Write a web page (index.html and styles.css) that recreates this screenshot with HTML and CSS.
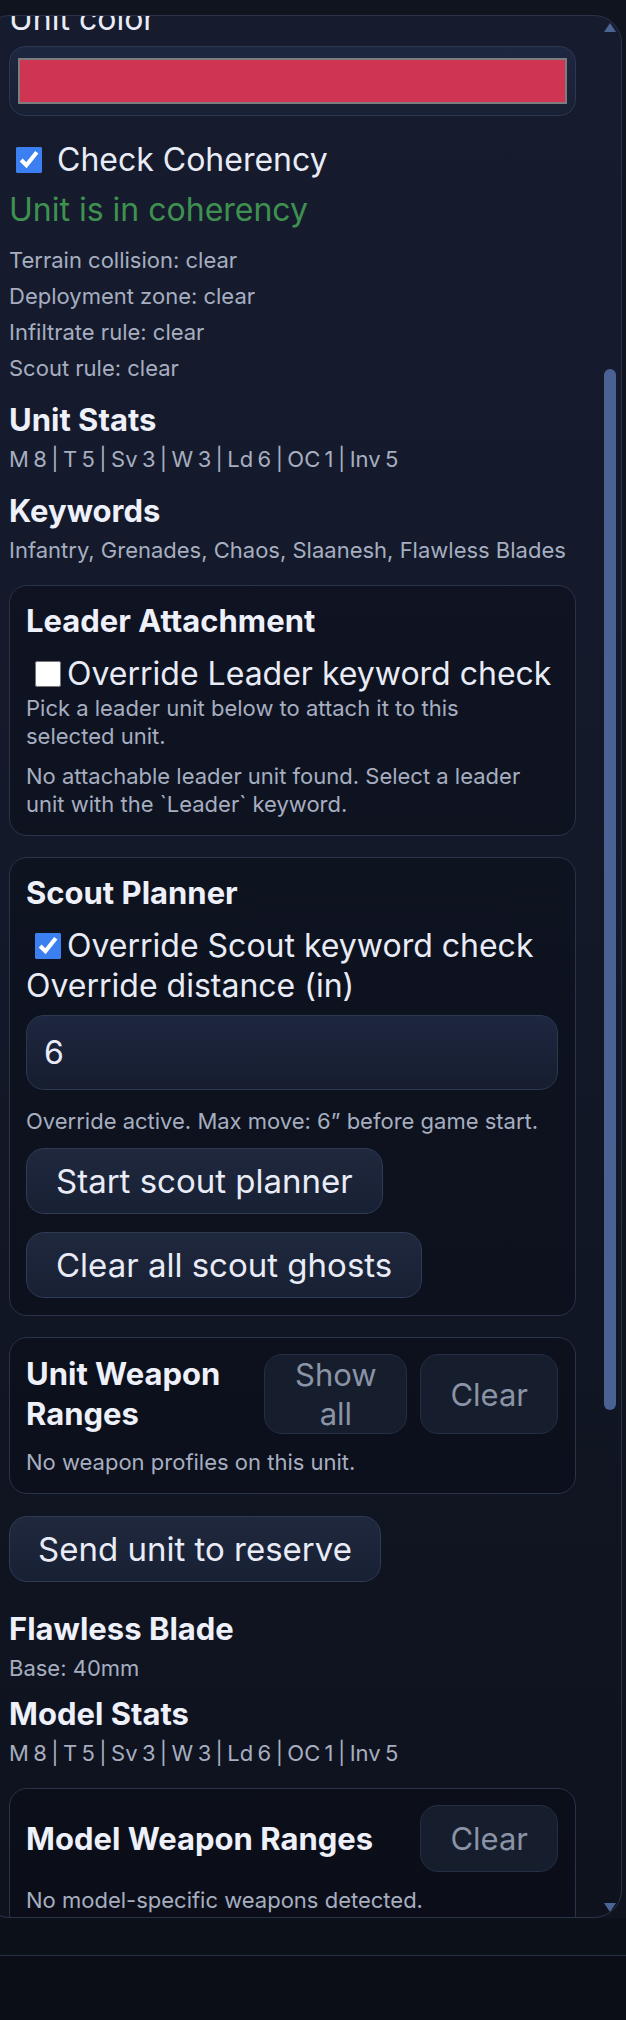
FILE: index.html
```html
<!DOCTYPE html>
<html lang="en">
<head>
    <meta charset="UTF-8">
    <meta name="viewport" content="width=device-width, initial-scale=1.0">
    <title>Unit Inspector</title>
    <link rel="stylesheet" href="styles.css">
</head>
<body>
    <div class="shell">
        <section class="panel">
            <div class="panel-body">
                <label class="field-label">Unit color</label>
                <div class="color-field"><span class="swatch"></span></div>

                <label class="check-row main"><input type="checkbox" checked> Check Coherency</label>
                <p class="status ok">Unit is in coherency</p>
                <p class="note">Terrain collision: clear</p>
                <p class="note">Deployment zone: clear</p>
                <p class="note">Infiltrate rule: clear</p>
                <p class="note">Scout rule: clear</p>

                <h3>Unit Stats</h3>
                <p class="note stats">M 8 | T 5 | Sv 3 | W 3 | Ld 6 | OC 1 | Inv 5</p>
                <h3>Keywords</h3>
                <p class="note">Infantry, Grenades, Chaos, Slaanesh, Flawless Blades</p>

                <div class="card">
                    <h3>Leader Attachment</h3>
                    <label class="check-row"><input type="checkbox"> Override Leader keyword check</label>
                    <p class="note">Pick a leader unit below to attach it to this selected unit.</p>
                    <p class="note">No attachable leader unit found. Select a leader unit with the `Leader` keyword.</p>
                </div>

                <div class="card">
                    <h3>Scout Planner</h3>
                    <label class="check-row"><input type="checkbox" checked> Override Scout keyword check</label>
                    <label class="field-label">Override distance (in)</label>
                    <input class="num" type="text" value="6">
                    <p class="note">Override active. Max move: 6” before game start.</p>
                    <button class="btn">Start scout planner</button>
                    <button class="btn">Clear all scout ghosts</button>
                </div>

                <div class="card">
                    <div class="card-head">
                        <h3>Unit Weapon Ranges</h3>
                        <button class="btn-ghost narrow">Show all</button>
                        <button class="btn-ghost">Clear</button>
                    </div>
                    <p class="note">No weapon profiles on this unit.</p>
                </div>

                <button class="btn reserve">Send unit to reserve</button>

                <h3 class="model-name">Flawless Blade</h3>
                <p class="note">Base: 40mm</p>
                <h3 class="tight">Model Stats</h3>
                <p class="note stats">M 8 | T 5 | Sv 3 | W 3 | Ld 6 | OC 1 | Inv 5</p>

                <div class="card">
                    <div class="card-head">
                        <h3>Model Weapon Ranges</h3>
                        <button class="btn-ghost">Clear</button>
                    </div>
                    <p class="note">No model-specific weapons detected.</p>
                </div>
            </div>

            <div class="scroll-up"></div>
            <div class="scroll-thumb"></div>
            <div class="scroll-down"></div>
        </section>
    </div>
    <footer class="bottom-bar"></footer>
</body>
</html>
```

FILE: styles.css
```css
body {
    margin: 0;
    background: #0e121c;
    font-family: Inter, "Noto Sans", sans-serif;
    color: #e9ecf6;
}

.shell {
    padding-top: 15px;
    background: #10141f;
}

/* scrolled side panel, left edge sits off screen */
.panel {
    position: relative;
    margin-left: -18px;
    width: 640px;
    height: 1903px;
    box-sizing: border-box;
    border: 1px solid #2a3349;
    border-radius: 28px;
    overflow: hidden;
    background: linear-gradient(180deg, #161c2e 0%, #131929 45%, #0e121d 100%);
}

.panel-body {
    margin-top: -14px;
    padding: 0 45px 0 26px;
}

.field-label {
    display: block;
    font-size: 32px;
    line-height: 34px;
}

.color-field {
    margin-top: 10px;
    height: 70px;
    box-sizing: border-box;
    padding: 11px 8px;
    border: 1px solid #2c3752;
    border-radius: 16px;
    background: linear-gradient(180deg, #1e2740, #182033);
}

.swatch {
    display: block;
    height: 100%;
    box-sizing: border-box;
    border: 2px solid #7d7d80;
    background: #cf3452;
}

.check-row {
    display: flex;
    align-items: center;
    font-size: 32px;
    line-height: 36px;
    margin-top: 18px;
}

.check-row input {
    width: 26px;
    height: 26px;
    margin: 0 6px 0 9px;
    accent-color: #3b7ff0;
}

.check-row.main {
    margin-top: 26px;
}

.check-row.main input {
    margin: 0 15px 0 7px;
}

.status {
    margin: 14px 0 18px;
    font-size: 32px;
    line-height: 36px;
}

.ok {
    color: #3f9150;
}

.note {
    margin: 0 0 8px;
    font-size: 22px;
    line-height: 28px;
    color: #a6aec0;
}

.stats {
    word-spacing: -1.8px;
}

h3 {
    margin: 21px 0 8px;
    font-size: 31px;
    line-height: 34px;
    font-weight: 700;
    color: #eef0fa;
}

h3.tight {
    margin-top: 15px;
}

.card {
    margin-top: 21px;
    padding: 18px 17px 17px 16px;
    border: 1px solid #2a334a;
    border-radius: 18px;
    background: rgba(6, 9, 18, 0.35);
}

.card h3 {
    margin: 0;
}

.card .note {
    max-width: 518px;
    margin: 0 0 12px;
}

.card .check-row + .note {
    margin-top: 2px;
}

.card .note:last-child {
    margin-bottom: 0;
}

.card .field-label {
    margin-top: 5px;
}

.num {
    display: block;
    width: 100%;
    height: 75px;
    box-sizing: border-box;
    margin: 12px 0 17px;
    padding: 0 17px;
    border: 1px solid #2c3752;
    border-radius: 18px;
    background: linear-gradient(180deg, #1e2740, #161d2f);
    color: #e9ecf6;
    font-family: inherit;
    font-size: 32px;
}

.btn {
    display: block;
    margin-top: 13px;
    padding: 14px 29px;
    border: 1px solid #2f3a55;
    border-radius: 18px;
    background: linear-gradient(180deg, #1f283d, #182034);
    color: #e9ecf6;
    font-family: inherit;
    font-size: 33px;
    line-height: 36px;
}

.btn + .btn {
    margin-top: 18px;
}

.btn.reserve {
    margin-top: 22px;
    padding: 14px 28px;
}

.model-name {
    margin-top: 30px;
}

.card-head {
    display: flex;
    align-items: stretch;
    gap: 13px;
    margin-top: -2px;
    margin-bottom: 14px;
}

.card-head h3 {
    flex: 1;
    align-self: center;
    line-height: 40px;
}

.btn-ghost {
    flex: none;
    min-height: 67px;
    padding: 0 29px;
    border: 1px solid #252e44;
    border-radius: 18px;
    background: #161d2c;
    color: #8b93a6;
    font-family: inherit;
    font-size: 31px;
    line-height: 39px;
}

.btn-ghost.narrow {
    width: 143px;
}

.scroll-up,
.scroll-down {
    position: absolute;
    right: 5px;
    width: 0;
    height: 0;
    border-left: 6px solid transparent;
    border-right: 6px solid transparent;
}

.scroll-up {
    top: 7px;
    border-bottom: 9px solid #4b6496;
}

.scroll-down {
    bottom: 5px;
    border-top: 9px solid #4b6496;
}

.scroll-thumb {
    position: absolute;
    top: 353px;
    right: 5px;
    width: 12px;
    height: 1041px;
    border-radius: 6px;
    background: #4a6293;
}

.bottom-bar {
    height: 102px;
    background: linear-gradient(180deg, #0c1019 0 37px, #262e42 37px 38px, #0b0e16 38px);
}
```
